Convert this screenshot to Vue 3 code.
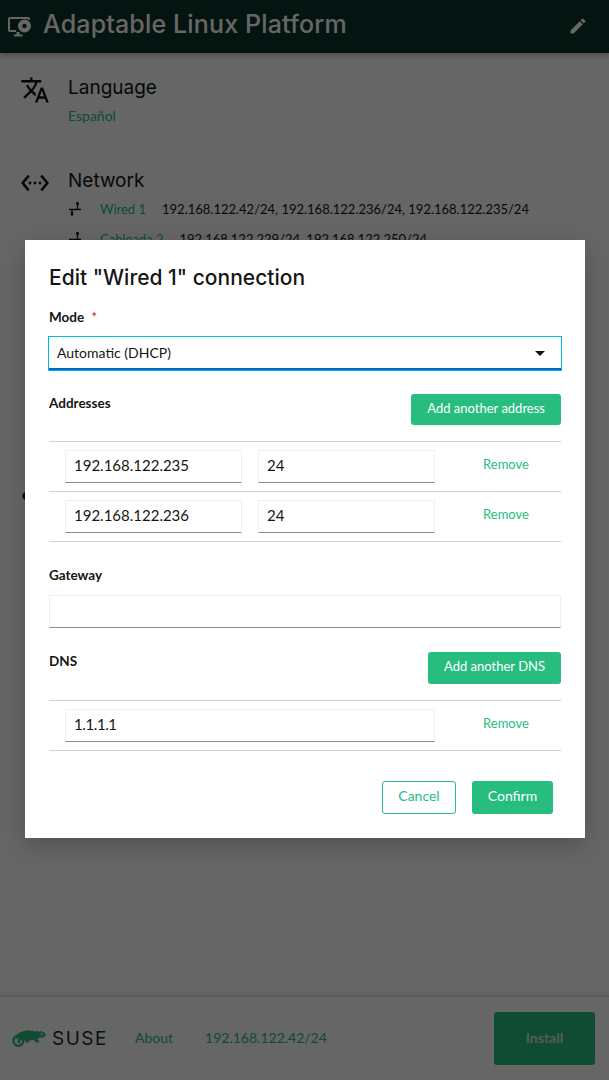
<script setup>
const addresses = [
  { ip: '192.168.122.235', prefix: '24' },
  { ip: '192.168.122.236', prefix: '24' }
]
</script>

<template>
  <div class="page">
    <header class="topbar">
      <svg class="tb-icon" viewBox="0 0 24 22" width="24" height="22" fill="currentColor"><path d="M3 1h18a2 2 0 0 1 2 2v1h-2V3H3v11h6v2H3a2 2 0 0 1-2-2V3a2 2 0 0 1 2-2z"/><path d="M9.500 16h3v2.500h3V20.500H7v-2h2.500z"/><path fill-rule="evenodd" d="M17.500 3.500a6.500 6.500 0 1 1 0 13 6.500 6.500 0 0 1 0-13zm0 4.300a2.200 2.200 0 1 0 0 4.400 2.200 2.200 0 0 0 0-4.400z"/></svg>
      <h1>Adaptable Linux Platform</h1>
      <svg class="pencil" viewBox="0 0 24 24" width="20" height="20" fill="currentColor"><path d="M3 17.250V21h3.750L17.810 9.940l-3.750-3.750L3 17.250zM20.710 7.040a1 1 0 0 0 0-1.410l-2.340-2.340a1 1 0 0 0-1.410 0l-1.830 1.830 3.750 3.750 1.830-1.830z"/></svg>
    </header>

    <main class="content">
      <section class="sect lang">
        <svg class="s-icon" viewBox="0 0 24 24" width="30" height="30" fill="currentColor"><path d="M12.870 15.070l-2.540-2.510.03-.03A17.520 17.520 0 0 0 14.070 6H17V4h-7V2H8v2H1v1.990h11.170C11.500 7.920 10.440 9.750 9 11.350 8.070 10.320 7.300 9.190 6.690 8h-2c.73 1.630 1.730 3.170 2.980 4.560l-5.090 5.020L4 19l5-5 3.110 3.110.76-2.040zM18.500 10h-2L12 22h2l1.120-3h4.750L21 22h2l-4.500-12zm-2.620 7l1.620-4.330L19.120 17h-3.240z"/></svg>
        <div class="s-body">
          <h2>Language</h2>
          <a class="link">Español</a>
        </div>
      </section>
      <section class="sect net">
        <svg class="s-icon" viewBox="0 0 24 24" width="30" height="30" fill="currentColor"><path d="M7.770 6.760L6.230 5.480.82 12l5.410 6.520 1.540-1.280L3.420 12l4.350-5.240zM7 13h2v-2H7v2zm10-2h-2v2h2v-2zm-6 2h2v-2h-2v2zm6.770-7.520l-1.540 1.280L20.580 12l-4.350 5.240 1.540 1.280L23.180 12l-5.410-6.520z"/></svg>
        <div class="s-body">
          <h2>Network</h2>
          <div class="conn first">
            <svg class="wire" viewBox="0 0 16 16" width="16" height="16"><path d="M9.500 2v6M1 8.500h12M4 8.500v4" stroke="currentColor" stroke-width="1.300" fill="none"/><rect x="8.300" y="1" width="2.400" height="3" fill="currentColor"/><rect x="2.800" y="11" width="2.400" height="3.500" fill="currentColor"/></svg>
            <a class="link">Wired 1</a>
            <span>192.168.122.42/24, 192.168.122.236/24, 192.168.122.235/24</span>
          </div>
          <div class="conn">
            <svg class="wire" viewBox="0 0 16 16" width="16" height="16"><path d="M9.500 2v6M1 8.500h12M4 8.500v4" stroke="currentColor" stroke-width="1.300" fill="none"/><rect x="8.300" y="1" width="2.400" height="3" fill="currentColor"/><rect x="2.800" y="11" width="2.400" height="3.500" fill="currentColor"/></svg>
            <a class="link">Cableada 2</a>
            <span>192.168.122.229/24, 192.168.122.250/24</span>
          </div>
        </div>
      </section>
      <section class="sect storage">
        <svg class="s-icon" viewBox="0 0 24 24" width="30" height="30" fill="currentColor"><circle cx="5" cy="12" r="3"/></svg>
      </section>
    </main>

    <footer class="footer">
      <div class="brand">
        <svg class="chameleon" viewBox="0 0 34 17" width="34" height="17">
          <path fill="currentColor" d="M3 7C6 2 12 0 18 .5c3 .3 5 1 6 1.500l1-1.500 1.200 1.300C28 .8 31 1.200 33 3.200c1.200 1.400 1 3.500-1.500 4-2.500.5-4 .3-5 .8l-1 1 1.800 2.800-.3.700H24l-2.300-2.700c-1.800.7-3.500.8-5 .7l.5 1.300-.3.700H14l-1.300-2.300c-1-.3-1.700-.6-2.700-1.300C8 8 5 8 4 9z"/>
          <path fill="none" stroke="currentColor" stroke-width="2.200" d="M4.500 6C2 7.500 1 10 1.500 12c.7 3 4 4.500 7 3.300 2.500-1 3.500-3.800 2-5.300-1.500-1.500-4-.7-4 1 0 1 1 1.500 1.800 1"/>
          <circle cx="29.500" cy="4" r="1.500" fill="#9fd8bd"/>
        </svg>
        <span class="suse">SUSE</span>
      </div>
      <a class="link f-link">About</a>
      <a class="link f-link ip">192.168.122.42/24</a>
      <button class="install" type="button">Install</button>
    </footer>

    <div class="backdrop"></div>

    <div class="modal" role="dialog">
      <h3>Edit "Wired 1" connection</h3>

      <label class="lbl mode-lbl">Mode <span class="req">*</span></label>
      <div class="select">
        <span>Automatic (DHCP)</span>
        <i class="caret"></i>
      </div>

      <div class="list-head addr-head">
        <span class="lbl">Addresses</span>
        <button class="btn small" type="button">Add another address</button>
      </div>
      <div class="rows">
        <div v-for="a in addresses" :key="a.ip" class="row">
          <div class="input half">{{ a.ip }}</div>
          <div class="input half">{{ a.prefix }}</div>
          <a class="remove">Remove</a>
        </div>
      </div>

      <div class="lbl gw-lbl">Gateway</div>
      <div class="input gateway"></div>

      <div class="list-head dns-head">
        <span class="lbl">DNS</span>
        <button class="btn small" type="button">Add another DNS</button>
      </div>
      <div class="rows">
        <div class="row">
          <div class="input wide">1.1.1.1</div>
          <a class="remove">Remove</a>
        </div>
      </div>

      <div class="actions">
        <button class="btn outline" type="button">Cancel</button>
        <button class="btn confirm" type="button">Confirm</button>
      </div>
    </div>
  </div>
</template>

<style>
html, body { margin: 0; padding: 0; }
</style>

<style scoped>
.page {
  position: relative;
  width: 609px;
  height: 1080px;
  overflow: hidden;
  background: #fff;
  display: flex;
  flex-direction: column;
  font-family: Lato, "Liberation Sans", sans-serif;
  font-size: 14px;
  color: #151515;
}
.topbar {
  height: 53px;
  flex: none;
  box-sizing: border-box;
  display: flex;
  align-items: center;
  padding: 0 21px 0 7px;
  background: #0c322c;
  color: #fff;
  box-shadow: 0 2px 6px rgba(0, 0, 0, .3);
}
.topbar h1 {
  margin: 0 0 5px 12px;
  font: 500 25px/1.2 Inter, "Open Sans", sans-serif;
  letter-spacing: .15px;
  flex: 1;
  white-space: nowrap;
}
.tb-icon { flex: none; }
.pencil { flex: none; margin-bottom: 1px; }
.content { flex: 1; padding: 20px 20px 0; min-height: 0; }
.sect { display: flex; gap: 18px; }
.s-icon { flex: none; margin-top: 2px; }
.s-body { flex: 1; min-width: 0; }
.sect h2 {
  margin: 0;
  font: 400 19px/30px Inter, "Open Sans", sans-serif;
}
.lang { height: 93px; }
.lang .link { display: block; margin-top: 4px; }
.net { height: 313px; }
.link { color: #26bd7f; }
.conn { display: flex; align-items: center; height: 30px; white-space: nowrap; font-size: 13px; }
.conn.first { margin-top: -2px; }
.conn .wire { margin-right: 16px; flex: none; }
.conn .link { margin-right: 16px; }
.footer {
  height: 84px;
  flex: none;
  box-sizing: border-box;
  display: flex;
  align-items: center;
  padding: 0 14px 0 12px;
  border-top: 1px solid #ddd;
  box-shadow: 0 -1px 4px rgba(0, 0, 0, .15);
}
.brand { display: flex; align-items: center; gap: 6px; color: #26bd7f; width: 123px; flex: none; }
.suse { color: #0c322c; font: 400 19px/1 Inter, sans-serif; letter-spacing: 1.5px; }
.f-link { font-size: 14px; margin-bottom: 2px; }
.ip { margin-left: 32px; }
.install {
  margin-left: auto;
  width: 101px;
  height: 53px;
  padding: 0 0 2px;
  border: 0;
  border-radius: 3px;
  background: #26bd7f;
  color: #d6e8e0;
  font: 700 14px Lato, sans-serif;
}
.backdrop { position: absolute; inset: 0; background: rgba(0, 0, 0, .6); }
.modal {
  position: absolute;
  left: 25px;
  top: 240px;
  width: 560px;
  height: 598px;
  box-sizing: border-box;
  background: #fff;
  padding: 24px 24px 0;
  box-shadow: 0 8px 24px rgba(0, 0, 0, .2);
  color: #151515;
}
.modal h3 {
  margin: 0;
  font: 500 21px/28px Inter, "Open Sans", sans-serif;
  color: #151515;
}
.lbl { font-size: 13.5px; font-weight: 700; line-height: 20px; color: #151515; display: block; }
.mode-lbl { margin-top: 15px; }
.req { color: #c9190b; margin-left: 4px; font-weight: 400; font-size: 13px; }
.select {
  margin-top: 10px;
  height: 33px;
  box-sizing: border-box;
  display: flex;
  align-items: center;
  justify-content: space-between;
  border-bottom: 2px solid #0066cc;
  padding: 0 16px 0 8px;
  box-shadow: 0 0 0 1px #00b6dc;
}
.caret {
  width: 0; height: 0;
  margin-top: 2px;
  border-left: 5px solid transparent;
  border-right: 5px solid transparent;
  border-top: 5px solid #151515;
}
.list-head { display: flex; justify-content: space-between; align-items: flex-start; }
.addr-head { margin-top: 24px; }
.btn {
  height: 31px;
  box-sizing: border-box;
  padding: 0 16px 4px;
  border: 0;
  border-radius: 3px;
  background: #26bd7f;
  color: #fff;
  font: 400 14px Lato, sans-serif;
}
.btn.small { font-size: 13px; }
.addr-head .lbl { margin-top: -1px; }
.dns-head .btn { height: 32px; }
.dns-head .lbl { margin-top: -1px; }
.rows { border-bottom: 1px solid #d2d2d2; margin-top: 16px; }
.row {
  display: flex;
  align-items: center;
  height: 50px;
  box-sizing: border-box;
  border-top: 1px solid #d2d2d2;
  padding: 0 0 0 16px;
  gap: 16px;
}
.input {
  height: 33px;
  box-sizing: border-box;
  border: 1px solid #f0f0f0;
  border-bottom: 1px solid #8a8d90;
  padding: 0 8px 4px;
  display: flex;
  align-items: center;
  font-size: 15px;
  color: #151515;
}
.half { width: 177px; flex: none; }
.wide { width: 370px; flex: none; letter-spacing: -.4px; }
.remove {
  flex: 1;
  text-align: center;
  color: #26bd7f;
  font-size: 13px;
  margin-top: -6px;
}
.gw-lbl { margin-top: 23px; }
.gateway { margin-top: 10px; }
.dns-head { margin-top: 24px; }
.actions { display: flex; justify-content: flex-end; gap: 16px; margin-top: 30px; padding-right: 8px; }
.actions .btn { height: 33px; }
.outline { background: #fff; color: #26bd7f; border: 1px solid #26bd7f; width: 74px; padding: 0 0 5px; }
.confirm { width: 81px; padding: 0 0 4px; }
</style>
